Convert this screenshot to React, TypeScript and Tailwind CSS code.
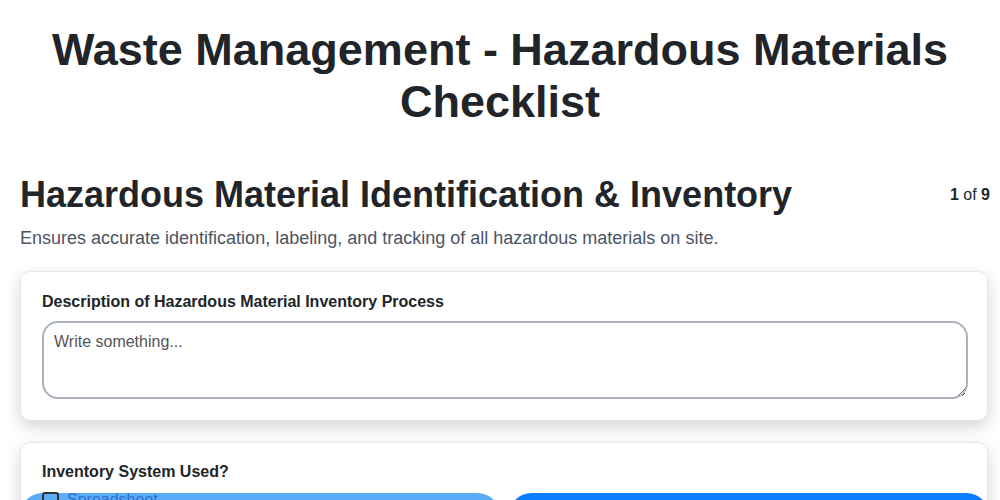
import React from "react";

export default function App() {
  return (
    <div className="min-h-screen bg-white px-5 text-[#212529]" style={{ fontFamily: '"Liberation Sans", Arial, sans-serif' }}>
      <h1 className="mx-auto pt-[24px] text-center text-[45px] font-bold leading-[52px] text-[#212529]">
        Waste Management - Hazardous Materials Checklist
      </h1>
      <div className="mt-[45px] -mr-[10px] flex items-start justify-between">
        <h2 className="text-[36px] font-bold leading-[44px] text-[#212529]">
          Hazardous Material Identification &amp; Inventory
        </h2>
        <div className="mt-[12px] text-[16px] leading-[20px] text-[#212529]">
          <span className="font-bold">1</span> of <span className="font-bold">9</span>
        </div>
      </div>
      <p className="mt-[9px] text-[18px] leading-[24px] text-[#4b5563]">
        Ensures accurate identification, labeling, and tracking of all hazardous materials on site.
      </p>
      <div className="mt-[21px] w-[968px] rounded-[10px] border border-[#e5e7eb] bg-white pl-[21px] pr-[19px] pb-[21px] pt-[20px] shadow-[0_6px_16px_rgba(0,0,0,0.17)]">
        <label className="block text-[16px] font-bold leading-[20px] text-[#212529]">
          Description of Hazardous Material Inventory Process
        </label>
        <textarea
          placeholder="Write something..."
          className="mt-[9px] block h-[78px] w-full rounded-[16px] border-2 border-[#a9b1ba] px-[10px] py-[9px] text-[16px] leading-[20px] text-[#212529] placeholder:text-[#555]"
        />
      </div>
      <div className="mt-[21px] w-[968px] rounded-[10px] border border-[#e5e7eb] bg-white pl-[21px] pr-[19px] pt-[19px] shadow-[0_6px_16px_rgba(0,0,0,0.17)]">
        <label className="block text-[16px] font-bold leading-[20px] text-[#212529]">
          Inventory System Used?
        </label>
        <div className="relative mt-[11px] ml-[-23px] mr-[-22px] grid grid-cols-2 gap-[7px]">
          <div className="h-[48px] rounded-full bg-[#5aabf8]" />
          <div className="h-[48px] rounded-full bg-[#0a7cff]" />
          <div className="absolute left-[23px] top-[-3px] flex items-center gap-[8px]">
            <span className="h-[17px] w-[17px] rounded-[3px] border-2 border-[#333]" />
            <span className="text-[16px] leading-[20px] text-[#2f6fd0]">Spreadsheet</span>
          </div>
        </div>
      </div>
    </div>
  );
}
